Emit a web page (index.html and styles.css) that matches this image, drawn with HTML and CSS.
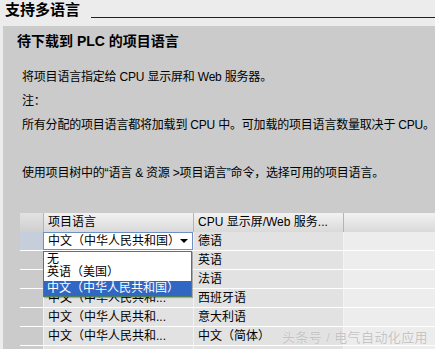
FILE: index.html
```html
<!DOCTYPE html>
<html lang="zh-CN">
<head>
<meta charset="UTF-8">
<title>支持多语言</title>
<link rel="stylesheet" href="styles.css">
</head>
<body>
<div class="page">
    <div class="titlebar">
        <h1>支持多语言</h1>
        <span class="rule"></span>
    </div>
    <div class="panel">
        <h2>待下载到 PLC 的项目语言</h2>
        <div class="desc">
            <p>将项目语言指定给 CPU 显示屏和 Web 服务器。</p>
            <p>注：</p>
            <p>所有分配的项目语言都将加载到 CPU 中。可加载的项目语言数量取决于 CPU。</p>
            <p class="gap">使用项目树中的“语言 &amp; 资源 &gt;项目语言”命令，选择可用的项目语言。</p>
        </div>
        <div class="grid">
            <div class="hd"></div>
            <div class="hd">项目语言</div>
            <div class="hd">CPU 显示屏/Web 服务...</div>
            <div class="hd"></div>

            <div class="rh sel"></div>
            <div class="cell edit">
                <div class="combo">
                    <span>中文（中华人民共和国）</span>
                    <span class="arrow"></span>
                </div>
                <ul class="droplist">
                    <li>无</li>
                    <li>英语（美国）</li>
                    <li class="hl">中文（中华人民共和国）</li>
                </ul>
            </div>
            <div class="cell">德语</div>
            <div class="cell blank"></div>

            <div class="rh"></div>
            <div class="cell"></div>
            <div class="cell">英语</div>
            <div class="cell blank"></div>

            <div class="rh"></div>
            <div class="cell"></div>
            <div class="cell">法语</div>
            <div class="cell blank"></div>

            <div class="rh"></div>
            <div class="cell">中文（中华人民共和...</div>
            <div class="cell">西班牙语</div>
            <div class="cell blank"></div>

            <div class="rh"></div>
            <div class="cell">中文（中华人民共和...</div>
            <div class="cell">意大利语</div>
            <div class="cell blank"></div>

            <div class="rh"></div>
            <div class="cell">中文（中华人民共和...</div>
            <div class="cell">中文（简体）</div>
            <div class="cell blank"></div>

            <div class="rh"></div>
            <div class="cell"></div>
            <div class="cell"></div>
            <div class="cell blank"></div>
        </div>
    </div>
    <div class="watermark">头条号 / 电气自动化应用</div>
</div>
</body>
</html>
```

FILE: styles.css
```css
body {
  margin: 0;
  font-family: 'Liberation Sans', 'Noto Sans CJK SC', sans-serif;
  font-size: 12px;
  color: #000;
  background-color: #ececec;
}

.page {
  position: relative;
  width: 435px;
  height: 349px;
  overflow: hidden;
}

.titlebar {
  display: flex;
  height: 26px;
  padding-left: 5px;
}

h1 {
  margin: 0;
  font-size: 15px;
  line-height: 20px;
  font-weight: bold;
}

.rule {
  flex: 1;
  height: 17px;
  margin-left: 11px;
  border-bottom: 1px solid #222;
}

.panel {
  margin-left: 3px;
  padding-top: 5px;
  height: 400px;
  background-color: #cbcbcb;
}

h2 {
  margin: 0;
  padding-left: 14px;
  font-size: 14px;
  line-height: 20px;
  font-weight: bold;
}

.desc {
  margin-top: 14px;
  padding-left: 19px;
}

.desc p {
  margin: 0;
  line-height: 24px;
  white-space: nowrap;
  letter-spacing: -0.2px;
}

.desc .gap {
  margin-top: 24px;
}

.grid {
  display: grid;
  grid-template-columns: 23px 150px 150px 1fr;
  grid-auto-rows: 18px;
  row-gap: 1px;
  margin-top: 28px;
  margin-left: 17px;
  background-color: #fff;
}

.hd {
  height: 19px;
  line-height: 19px;
  padding-left: 4px;
  background: linear-gradient(#f2f2f2, #d9d9d9);
  border-bottom: 1px solid #a8a8a8;
  border-left: 1px solid #b4b4b4;
  white-space: nowrap;
  overflow: hidden;
}

.hd:first-child {
  border-left: none;
  background: linear-gradient(#e2e2e2, #cfcfcf);
}

.rh {
  background-color: #cbcbcb;
}

.rh.sel {
  background-color: #c6cedb;
}

.cell {
  position: relative;
  padding-left: 4px;
  line-height: 18px;
  background-color: #e2e2e2;
  border-left: 1px solid #f3f3f3;
  white-space: nowrap;
}

.cell.blank {
  background-color: #ededed;
}

.cell.edit {
  padding: 0;
  border-left: none;
}

.combo {
  display: flex;
  justify-content: space-between;
  align-items: center;
  height: 16px;
  padding-left: 4px;
  background-color: #fff;
  border: 1px solid #6f8fc4;
}

.combo span {
  line-height: 16px;
}

.arrow {
  width: 0;
  height: 0;
  margin-right: 4px;
  border-left: 4px solid transparent;
  border-right: 4px solid transparent;
  border-top: 4px solid #000;
}

.droplist {
  position: absolute;
  top: 19px;
  left: 0;
  width: 147px;
  margin: 0;
  padding: 0;
  list-style: none;
  background-color: #fff;
  border: 1px solid #4f7f57;
  box-shadow: 1px 1px 1px rgba(0, 0, 0, 0.25);
  z-index: 2;
}

.droplist li {
  height: 13px;
  line-height: 13px;
  padding-left: 3px;
}

.droplist li:first-child {
  margin-top: 1px;
}

.droplist li.hl {
  height: 15px;
  line-height: 15px;
  margin-top: 2px;
  color: #fff;
  background-color: #3167c4;
}

.watermark {
  position: absolute;
  right: 7px;
  bottom: 3px;
  font-size: 13px;
  color: #c4c4c4;
  text-shadow: 0 0 1px #fafafa;
  letter-spacing: 0.4px;
}
```
